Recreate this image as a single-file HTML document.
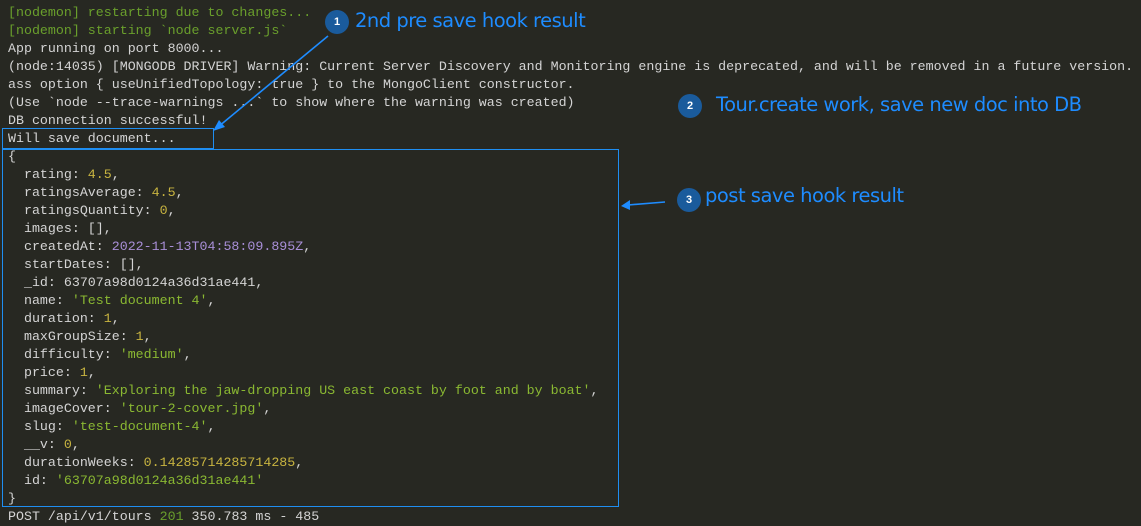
<!DOCTYPE html>
<html><head><style>
body{margin:0;width:1141px;height:524px;background:#272822;overflow:hidden;position:relative;font-family:"Liberation Mono",monospace;}
.t{position:absolute;left:8px;top:4px;font-size:13.3px;line-height:18px;color:#d4d4d4;white-space:pre;}
.g{color:#6a9f2c}.n{color:#c8b440}.s{color:#8ab832}.p{color:#a98fd8}
.box{position:absolute;border:1px solid #1f8ef1;}
.ann{position:absolute;font-family:"DejaVu Sans","Liberation Sans",sans-serif;font-size:19.5px;color:#1e8cff;white-space:nowrap;letter-spacing:-0.5px}
.c{position:absolute;width:24px;height:24px;border-radius:50%;background:#1a5b9c;color:#fff;font:bold 11px "Liberation Sans",sans-serif;text-align:center;line-height:24px}
</style></head><body>
<div class="t"><span class="g">[nodemon] restarting due to changes...
[nodemon] starting `node server.js`</span>
App running on port 8000...
(node:14035) [MONGODB DRIVER] Warning: Current Server Discovery and Monitoring engine is deprecated, and will be removed in a future version.
ass option { useUnifiedTopology: true } to the MongoClient constructor.
(Use `node --trace-warnings ...` to show where the warning was created)
DB connection successful!
Will save document...
{
  rating: <span class="n">4.5</span>,
  ratingsAverage: <span class="n">4.5</span>,
  ratingsQuantity: <span class="n">0</span>,
  images: [],
  createdAt: <span class="p">2022-11-13T04:58:09.895Z</span>,
  startDates: [],
  _id: 63707a98d0124a36d31ae441,
  name: <span class="s">'Test document 4'</span>,
  duration: <span class="n">1</span>,
  maxGroupSize: <span class="n">1</span>,
  difficulty: <span class="s">'medium'</span>,
  price: <span class="n">1</span>,
  summary: <span class="s">'Exploring the jaw-dropping US east coast by foot and by boat'</span>,
  imageCover: <span class="s">'tour-2-cover.jpg'</span>,
  slug: <span class="s">'test-document-4'</span>,
  __v: <span class="n">0</span>,
  durationWeeks: <span class="n">0.14285714285714285</span>,
  id: <span class="s">'63707a98d0124a36d31ae441'</span>
}
POST /api/v1/tours <span class="g">201</span> 350.783 ms - 485</div>
<div class="box" style="left:2px;top:128px;width:210px;height:19px"></div>
<div class="box" style="left:2px;top:149px;width:615px;height:356px"></div>
<svg style="position:absolute;left:0;top:0" width="1141" height="524">
<g stroke="#1e8cff" stroke-width="1.6" fill="#1e8cff">
<line x1="328" y1="36" x2="218" y2="127"/><polygon points="213,131 219,120 225,127" stroke="none"/>
<line x1="665" y1="202" x2="628" y2="205"/><polygon points="621,206 630,200 630,210" stroke="none"/>
</g></svg>
<div class="c" style="left:325px;top:10px">1</div>
<div class="ann" style="left:355px;top:9px">2nd pre save hook result</div>
<div class="c" style="left:678px;top:94px">2</div>
<div class="ann" style="left:716px;top:93px">Tour.create work, save new doc into DB</div>
<div class="c" style="left:677px;top:188px">3</div>
<div class="ann" style="left:705px;top:184px">post save hook result</div>
</body></html>
